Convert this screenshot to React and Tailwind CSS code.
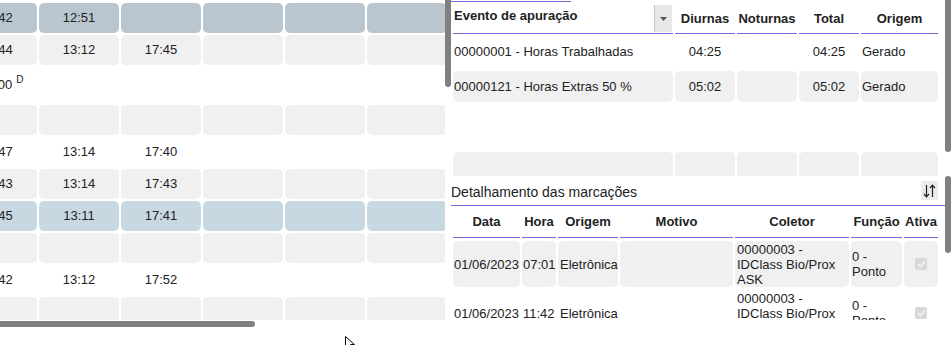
import React from 'react';

const PURPLE = 'bg-[#6f67dc]';

const leftRows = [
  { h: 'h-[30px]', tone: 'bg-[#b9c6cf]', cells: ['11:42', '12:51'] },
  { h: 'h-[30px]', tone: 'bg-[#f0f0f0]', cells: ['11:44', '13:12', '17:45'] },
  { h: 'h-[36px]', tone: '', cells: ['08:00'], sup: true },
  { h: 'h-[30px]', tone: 'bg-[#f0f0f0]', cells: [] },
  { h: 'h-[30px]', tone: '', cells: ['11:47', '13:14', '17:40'] },
  { h: 'h-[30px]', tone: 'bg-[#f0f0f0]', cells: ['11:43', '13:14', '17:43'] },
  { h: 'h-[30px]', tone: 'bg-[#c8d8e3]', cells: ['11:45', '13:11', '17:41'] },
  { h: 'h-[30px]', tone: 'bg-[#f0f0f0]', cells: [] },
  { h: 'h-[30px]', tone: '', cells: ['11:42', '13:12', '17:52'] },
  { h: 'h-[30px]', tone: 'bg-[#f0f0f0]', cells: [] },
];

const LeftGrid = () => (
  <div className="flex flex-col gap-[2px] ml-[-43px] mt-[3px] w-max">
    {leftRows.map((row, i) => (
      <div key={i} className={`flex gap-[2px] ${row.h}`}>
        {[0, 1, 2, 3, 4, 5].map((c) => (
          <div
            key={c}
            className={`w-[80px] shrink-0 rounded-[5px] flex items-center justify-center ${row.tone} ${
              row.sup && c === 0 ? 'pl-[9px]' : ''
            }`}
          >
            {row.cells[c] || ''}
            {row.sup && c === 0 && <sup className="text-[10px] ml-[4px]">D</sup>}
          </div>
        ))}
      </div>
    ))}
  </div>
);

const apuracao = [
  { h: 'h-[32px] mt-[2px]', grey: false, ev: '00000001 - Horas Trabalhadas', d: '04:25', n: '', t: '04:25', o: 'Gerado' },
  { h: 'h-[31px] mt-[3px]', grey: true, ev: '00000121 - Horas Extras 50 %', d: '05:02', n: '', t: '05:02', o: 'Gerado' },
  { h: 'h-[44px] mt-[3px]', grey: false, ev: '', d: '', n: '', t: '', o: '' },
  { h: 'h-[31px] mt-[3px]', grey: true, ev: '', d: '', n: '', t: '', o: '' },
];

const ApuracaoTable = () => (
  <div className="flex flex-col pl-[2px]">
    <div className={`w-[120px] h-px mt-[1px] ml-[-2px] ${PURPLE}`} />
    <div className="flex gap-[2px] h-[29px] mt-[3px] font-bold">
      <div className="w-[220px] flex border-b border-[#6f67dc]">
        <span className="pl-[1px] pt-[1px]">Evento de apuração</span>
        <div className="ml-auto mr-[1px] w-[18px] h-[27px] border-l border-[#c4c4c4] bg-[#e8e8e8] flex items-center justify-center">
          <svg width="7" height="4" viewBox="0 0 7 4">
            <polygon points="0,0 7,0 3.5,4" fill="#555" />
          </svg>
        </div>
      </div>
      <div className="w-[60px] flex items-center justify-center border-b border-[#6f67dc]">Diurnas</div>
      <div className="w-[60px] flex items-center justify-center border-b border-[#6f67dc]">Noturnas</div>
      <div className="w-[60px] flex items-center justify-center border-b border-[#6f67dc]">Total</div>
      <div className="w-[77px] flex items-center justify-center border-b border-[#6f67dc]">Origem</div>
    </div>
    {apuracao.map((r, i) => {
      const bg = r.grey ? 'bg-[#f0f0f0] rounded-[5px]' : '';
      return (
        <div key={i} className={`flex gap-[2px] ${r.h}`}>
          <div className={`w-[220px] flex items-center pl-[1px] ${bg}`}>{r.ev}</div>
          <div className={`w-[60px] flex items-center justify-center ${bg}`}>{r.d}</div>
          <div className={`w-[60px] flex items-center justify-center ${bg}`}>{r.n}</div>
          <div className={`w-[60px] flex items-center justify-center ${bg}`}>{r.t}</div>
          <div className={`w-[77px] flex items-center pl-[1px] ${bg}`}>{r.o}</div>
        </div>
      );
    })}
  </div>
);

const cols = [
  { label: 'Data', w: 'w-[67px]' },
  { label: 'Hora', w: 'w-[34px]' },
  { label: 'Origem', w: 'w-[60px]' },
  { label: 'Motivo', w: 'w-[113px]' },
  { label: 'Coletor', w: 'w-[114px]' },
  { label: 'Função', w: 'w-[51px]' },
  { label: 'Ativa', w: 'w-[34px]' },
];

const marcacoes = [
  { hora: '07:01', grey: true },
  { hora: '11:42', grey: false },
];

const Checkbox = () => (
  <div className="w-[12px] h-[12px] rounded-[2px] bg-[#d8d8d8] flex items-center justify-center">
    <svg width="9" height="8" viewBox="0 0 9 8">
      <path d="M1 4.2 L3.4 6.5 L8 1.2" stroke="#f4f4f4" strokeWidth="1.6" fill="none" />
    </svg>
  </div>
);

const SortIcon = () => (
  <div className="w-[17px] h-[19px] bg-[#ececec] flex items-center justify-center">
    <svg width="13" height="14" viewBox="0 0 13 14">
      <path d="M3.5 1 V12.5 M1 10 L3.5 12.8 L6 10" stroke="#222" strokeWidth="1.2" fill="none" />
      <path d="M9.5 13 V1.5 M7 4 L9.5 1.2 L12 4" stroke="#222" strokeWidth="1.2" fill="none" />
    </svg>
  </div>
);

const MarcacoesTable = () => (
  <div className="flex flex-col">
    <div className="h-[29px] flex items-center justify-between pr-[7px]">
      <span className="text-[14px] mt-[3px]">Detalhamento das marcações</span>
      <SortIcon />
    </div>
    <div className={`h-px w-full ${PURPLE}`} />
    <div className="flex gap-[2px] pl-[2px] h-[31px] mt-[1px] font-bold">
      {cols.map((c) => (
        <div key={c.label} className={`${c.w} flex items-center justify-center border-b border-[#6f67dc]`}>
          {c.label}
        </div>
      ))}
    </div>
    {marcacoes.map((r) => {
      const bg = r.grey ? 'bg-[#f0f0f0] rounded-[5px]' : '';
      return (
        <div key={r.hora} className="flex gap-[2px] pl-[2px] h-[46px] mt-[3px] shrink-0 leading-[15px]">
          <div className={`w-[67px] flex items-center pl-[1px] ${bg}`}>01/06/2023</div>
          <div className={`w-[34px] flex items-center pl-[1px] ${bg}`}>{r.hora}</div>
          <div className={`w-[60px] flex items-center pl-[2px] ${bg}`}>Eletrônica</div>
          <div className={`w-[113px] ${bg}`} />
          <div className={`w-[114px] flex flex-col justify-center pl-[2px] ${bg}`}>
            <span>00000003 -</span>
            <span>IDClass Bio/Prox</span>
            <span>ASK</span>
          </div>
          <div className={`w-[51px] flex flex-col justify-center pl-[1px] ${bg}`}>
            <span>0 -</span>
            <span>Ponto</span>
          </div>
          <div className={`w-[34px] flex items-center justify-center ${bg}`}>
            <Checkbox />
          </div>
        </div>
      );
    })}
  </div>
);

export default function App() {
  return (
    <div className="relative w-[951px] h-[345px] bg-white overflow-hidden text-[13px] text-[#222] font-['Liberation_Sans',Arial,sans-serif]">
      <div className="flex h-[320px]">
        {/* left grid */}
        <div className="w-[445px] h-full overflow-hidden flex flex-col">
          <div className={`h-px w-full ${PURPLE}`} />
          <LeftGrid />
        </div>
        <div className="w-[6px]">
          <div className="h-[87px] bg-[#808080] rounded-b-full" />
        </div>

        {/* right panel */}
        <div className="w-[500px] flex flex-col">
          <div className="flex h-[176px] shrink-0">
            <div className="w-[494px] overflow-hidden">
              <ApuracaoTable />
            </div>
            <div className="w-[6px]">
              <div className="h-[152px] bg-[#808080] rounded-b-full" />
            </div>
          </div>
          <div className="flex h-[144px]">
            <div className="w-[494px] overflow-hidden">
              <MarcacoesTable />
            </div>
            <div className="w-[6px]">
              <div className="h-[77px] bg-[#808080] rounded-full" />
            </div>
          </div>
        </div>
      </div>

      <div className="h-[25px] pt-px">
        <div className="w-[255px] h-[6px] bg-[#808080] rounded-r-full" />
      </div>

      {/* mouse pointer */}
      <svg className="absolute left-[345px] top-[336px]" width="12" height="14" viewBox="0 0 12 14">
        <path d="M0.5 0.5 V12 L3.5 9.3 L5.6 13.5 L7.4 12.6 L5.4 8.6 L9.5 8.6 Z" fill="#fff" stroke="#000" strokeWidth="1" />
      </svg>
    </div>
  );
}
